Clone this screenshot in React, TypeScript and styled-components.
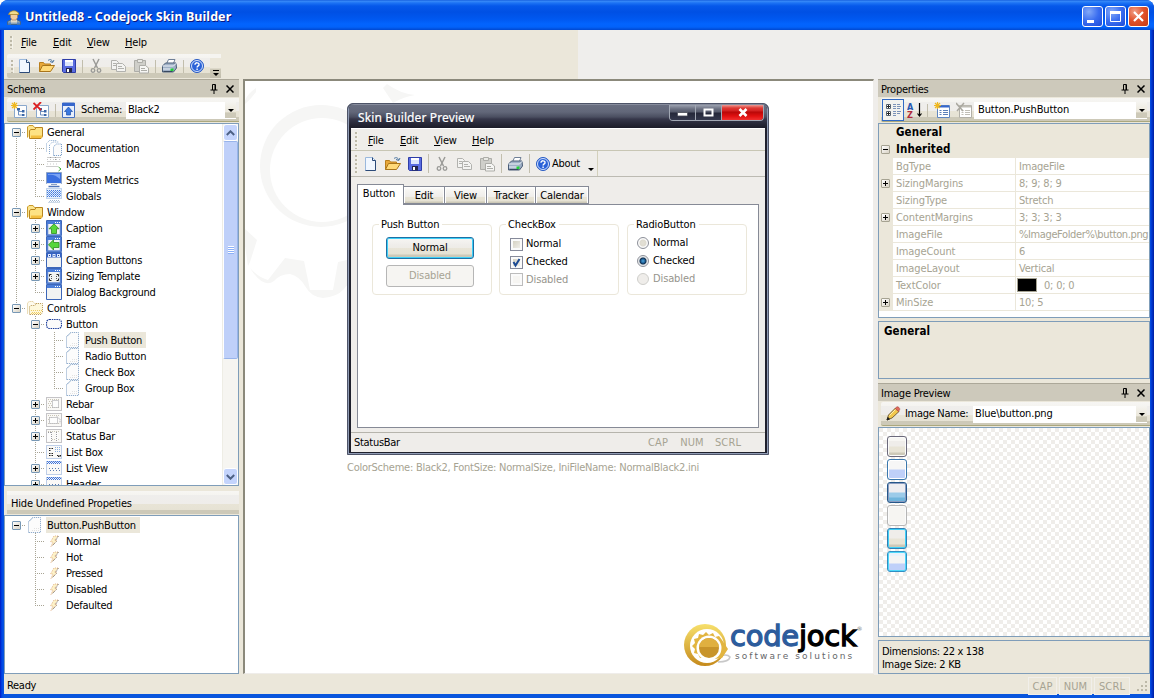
import React from "react";
import styled, { createGlobalStyle, css } from "styled-components";

const Global = createGlobalStyle`
  * { box-sizing: border-box; }
  body { margin: 0; background: #fff; overflow: hidden; }
  #root {
    font-family: "DejaVu Sans Condensed", "DejaVu Sans", sans-serif;
    font-stretch: condensed;
    font-size: 11px; line-height: 14px; letter-spacing: -0.3px; color: #000;
    white-space: nowrap; cursor: default;
  }
  svg { display: block; flex: none; }
`;

const BEIGE = "#ebe7da";
const EDGE = "#7f9db9";
const GREY = "#a6a392";

/* ---------- window frame ---------- */
const Window = styled.div`
  width: 1154px; height: 698px; display: flex; flex-direction: column;
  background: linear-gradient(90deg, #0019c4 0, #0048e8 2px, #0855dd 4px, #0855dd 1150px, #0040e0 1151px, #001ea0 100%);
  border-radius: 8px 8px 0 0; overflow: hidden;
`;
const TitleBar = styled.div`
  height: 30px; flex: none; display: flex; align-items: center; padding: 3px 5px 0 6px; color: #fff;
  background: linear-gradient(180deg, #0a52d8 0, #3a8cf8 1px, #1c72f4 3px, #0558ea 6px, #0050e4 12px, #0058f0 19px, #0264fe 24px, #0262fa 27px, #0048d0 30px);
`;
const Title = styled.div`
  flex: 1; margin-left: 3px; font: bold 12.5px/22px "Noto Sans", sans-serif; letter-spacing: 0.08px;
  text-shadow: 1px 1px 0 #0a1883;
`;
const CaptionButton = styled.div<{ $close?: boolean }>`
  width: 21px; height: 21px; margin-left: 2px; border: 1px solid #fff; border-radius: 3px;
  background: ${p => p.$close
    ? "radial-gradient(circle at 30% 25%, #f0a088 0, #e2532c 45%, #c63a12 100%)"
    : "radial-gradient(circle at 30% 25%, #83a9f8 0, #3a6df0 50%, #1c4bd8 100%)"};
`;
const Client = styled.div`
  margin: 0 4px; height: 664px; flex: none; display: flex; flex-direction: column; background: ${BEIGE};
`;
const Bars = styled.div`
  height: 49px; flex: none;
  background: linear-gradient(90deg, #ebe7da 0, #ebe7da 574px, #efeeec 574px);
`;
const MenuBar = styled.div<{ $pad: number }>`
  height: 24px; display: flex; align-items: center; padding: 1px 0 0 ${p => p.$pad}px;
`;
const MenuItem = styled.div<{ $w: number }>`
  width: ${p => p.$w}px; letter-spacing: -0.2px; &::first-letter { text-decoration: underline; text-underline-offset: 1px; }
`;
const Gripper = styled.div<{ $h?: number }>`
  width: 3px; height: ${p => p.$h ?? 13}px; flex: none;
  background: repeating-linear-gradient(180deg, #bdb9a8 0, #bdb9a8 2px, transparent 2px, transparent 4px);
  border-right: 1px solid #f4f2ea;
`;
const barSkin = css`
  background: linear-gradient(180deg, #f7f6f3 0, #f5f4f0 4px, #efeeec 4px, #efedea 13px, #e8e4d6 13px, #e6e2d4 19px, #cdc9b8 19px, #cdc9b8 100%);
`;
const ToolStrip = styled.div`
  display: flex; align-items: flex-start; margin-left: 3px; width: 214px; height: 24px;
`;
const ToolBar = styled.div`
  ${barSkin} width: 203px; height: 24px; display: flex; align-items: center; padding-left: 4px; border-radius: 2px 0 0 2px;
`;
const BarEnd = styled.div`
  width: 11px; height: 24px; display: flex; align-items: flex-end; justify-content: center; padding-bottom: 1px;
  background: linear-gradient(180deg, #f5f4f0 0, #f5f4f0 4px, #ebe7da 4px, #ebe7da 14px, #cdc9b8 15px, #c2bead 100%);
`;
const Tool = styled.div<{ $w?: number }>`
  width: ${p => p.$w ?? 22}px; flex: none; display: flex;
`;
const Rule = styled.div<{ $r?: number; $h?: number }>`
  width: 1px; height: ${p => p.$h ?? 13}px; flex: none; background: #c2bead;
  margin: 0 ${p => p.$r ?? 5}px 0 0;
`;

const Main = styled.div`display: flex; height: 596px; flex: none;`;

/* ---------- dock panes ---------- */
const LeftDock = styled.div`width: 235px; flex: none; display: flex; flex-direction: column;`;
const RightDock = styled.div`width: 272px; flex: none; display: flex; flex-direction: column;`;
const PaneHeader = styled.div`
  height: 18px; flex: none; display: flex; align-items: center; padding: 1px 5px 0 3px; border-top: 1px solid #aca899;
  background: #cdc9bb;
`;
const PaneName = styled.div`flex: 1; letter-spacing: -0.25px; padding-top: 1px;`;
const PaneBar = styled.div<{ $pad?: number }>`
  ${barSkin} height: 24px; flex: none; margin: 1px 0 1px 3px; padding: 1px 3px 0 ${p => p.$pad ?? 4}px; display: flex; align-items: center;
  border-bottom: 1px solid #aba87e; border-radius: 2px 0 0 2px;
`;
const Combo = styled.div<{ $ls?: number; $pad?: number }>`
  flex: 1; height: 17px; display: flex; align-items: center; justify-content: space-between; background: #fff; padding: 0 0 0 ${p => p.$pad ?? 2}px;
  letter-spacing: ${p => p.$ls ?? -0.25}px;
`;
const ComboArrow = styled.div`
  width: 11px; height: 16px; display: flex; align-items: center; justify-content: center;
  background: linear-gradient(180deg, #f5f4f0 0, #ebe7da 65%, #cdc9b8 66%);
`;
const Arrow = styled.i`
  border: 3px solid transparent; border-top-color: #000; border-bottom: 0; width: 0; height: 0;
`;
const Box = styled.div<{ $h: number; $bg?: string }>`
  height: ${p => p.$h}px; flex: none; border: 1px solid ${EDGE}; background: ${p => p.$bg ?? "#fff"}; overflow: hidden; display: flex;
`;
const HideBar = styled.div`
  ${barSkin} height: 23px; flex: none; margin: 5px 0 1px 3px; padding: 2px 4px 0; display: flex; align-items: center; letter-spacing: -0.2px;
`;

/* ---------- tree ---------- */
const TreeList = styled.div<{ $top?: number }>`flex: 1; padding: ${p => p.$top ?? 0}px 0 0 2px; overflow: hidden;`;
const TreeRow = styled.div`height: 16px; display: flex; align-items: center;`;
const dotV = "repeating-linear-gradient(180deg,#a8a494 0,#a8a494 1px,transparent 1px,transparent 2px)";
const dotH = "repeating-linear-gradient(90deg,#a8a494 0,#a8a494 1px,transparent 1px,transparent 2px)";
const Guide = styled.div<{ $v: "full" | "top" | "bottom" | "none"; $h?: boolean }>`
  width: 19px; height: 16px; flex: none; display: flex; align-items: center; padding-left: 5px;
  background-image: ${dotV}, ${dotH};
  background-repeat: no-repeat;
  background-position: 9px ${p => (p.$v === "bottom" ? 8 : 0)}px, 9px 8px;
  background-size: 1px ${p => (p.$v === "none" ? 0 : p.$v === "full" ? 16 : 8)}px, ${p => (p.$h ? 10 : 0)}px 1px;
`;
const Expander = styled.div<{ $open?: boolean; $plain?: boolean }>`
  width: 9px; height: 9px; border: 1px solid ${p => (p.$plain ? "#a6a392" : "#7898b5")}; border-radius: 1px;
  background:
    linear-gradient(#000, #000) 1px 3px / 5px 1px no-repeat,
    linear-gradient(#000, #000) 3px 1px / ${p => (p.$open ? "0 0" : "1px 5px")} no-repeat,
    linear-gradient(135deg, #fff, #d8d2c4);
`;
const TreeIcon = styled.div`width: 20px; padding-left: 1px; flex: none;`;
const TreeText = styled.div<{ $sel?: boolean }>`
  height: 16px; line-height: 16px; padding: 1px 4px 0 1px; letter-spacing: -0.24px; ${p => p.$sel && `background: ${BEIGE};`}
`;
const ScrollBar = styled.div`
  width: 16px; flex: none; background: #f6f5f1; display: flex; flex-direction: column; border-left: 1px solid #eeede5;
`;
const ScrollButton = styled.div`
  height: 17px; border: 1px solid #fff; border-radius: 3px; background: #c4d4fc; display: flex; align-items: center; justify-content: center;
`;
const Thumb = styled.div`
  height: 218px; border: 1px solid #98b4ea; border-left-color: #fff; border-radius: 2px; background: #bfd0f9;
  display: flex; align-items: center; justify-content: center;
`;
const ThumbGrip = styled.div`
  width: 6px; height: 8px; background: repeating-linear-gradient(180deg, #fff 0, #fff 1px, #8cb0f8 1px, #8cb0f8 2px);
`;
const Grow = styled.div`flex: 1;`;

/* ---------- document area ---------- */
const Document = styled.div`
  position: relative; margin-left: 4px; width: 631px; flex: none; background: #fff; overflow: hidden; height: 595px;
  border: 2px solid #8b897b; border-right: 1px solid #efedea; border-bottom: 1px solid #efedea;
`;
const Watermark = styled.svg`position: absolute; left: 0; top: 0;`;
const Gutter = styled.div`width: 4px; background: #efedea;`;
const Note = styled.div`position: absolute; left: 102px; top: 380px; color: ${GREY}; letter-spacing: -0.25px;`;
const Logo = styled.div`position: absolute; left: 438px; top: 540px; display: flex;`;
const LogoWords = styled.div`margin-left: -1px; padding-top: 1px;`;
const LogoName = styled.div`
  height: 29px; font: 29px/29px "DejaVu Sans", sans-serif; letter-spacing: -0.25px; color: #2d5c9c; -webkit-text-stroke: 1.3px #2d5c9c;
  display: flex;
`;
const LogoTail = styled.span`color: #000; -webkit-text-stroke: 1.3px #000;`;
const LogoMark = styled.span`font-size: 6px; line-height: 14px; color: #777; -webkit-text-stroke: 0; letter-spacing: 0;`;
const LogoLine = styled.div`
  margin: 0 0 0 5px; font: 9px/10px "DejaVu Sans", sans-serif; letter-spacing: 2.08px; color: #66676a;
`;

/* ---------- skinned preview window ---------- */
const Preview = styled.div`
  position: absolute; left: 102px; top: 22px; width: 422px; height: 352px; border-radius: 6px 6px 0 0;
  border: 1px solid #4e5468; background: #1f202c; padding: 0 3px 2px 3px; display: flex; flex-direction: column;
  box-shadow: inset 1px 0 0 #8f9bb4, inset -1px 0 0 #8f9bb4, inset 0 -1px 0 #8f9bb4;
`;
const PreviewTitle = styled.div`
  height: 24px; flex: none; margin: 0 -2px 0 -2px; border-radius: 5px 5px 0 0; display: flex; align-items: flex-start; padding: 0 3px 0 9px; color: #fff;
  background: linear-gradient(180deg, #a5abba 0, #696e80 1px, #626779 8px, #4a4e60 13px, #36374a 15px, #292a3a 19px, #1c1c28 24px);
`;
const PreviewName = styled.div`flex: 1; font: 400 12px/27px "Noto Sans", sans-serif; letter-spacing: 0.12px; -webkit-text-stroke: 0.2px #fff;`;
const FrameButtons = styled.div`
  display: flex; height: 16px; border: 1px solid #a2a8b4; border-top: 0; border-radius: 0 0 4px 4px; overflow: hidden; margin-top: 1px;
`;
const FrameButton = styled.div<{ $w: number; $close?: boolean }>`
  width: ${p => p.$w}px; height: 15px; border-right: 1px solid #a2a8b4; display: flex; align-items: center; justify-content: center;
  background: ${p => p.$close
    ? "linear-gradient(180deg,#ee9a94 0,#de3a34 3px,#d32020 6px,#b80808 7px,#e01010 11px,#f03030 15px)"
    : "linear-gradient(180deg,#9ca2b0 0,#6a6f80 4px,#565b6c 7px,#25283a 8px,#34384c 15px)"};
  &:last-child { border-right: 0; }
`;
const PreviewBody = styled.div`flex: 1; background: #efedea; display: flex; flex-direction: column; border-top: 1px solid #fff; letter-spacing: -0.12px;`;
const PreviewMenu = styled.div`height: 22px; flex: none; display: flex; align-items: center; padding: 2px 0 0 4px; border-bottom: 1px solid #c8c6b4;`;
const PreviewTools = styled.div`height: 26px; flex: none; display: flex; border-bottom: 1px solid #bcbab2;`;
const PreviewToolBar = styled.div`width: 247px; display: flex; align-items: center; padding-left: 4px; border-right: 1px solid #d3d0bc;`;
const MenuGap = styled.div<{ $w: number }>`width: ${p => p.$w}px; flex: none;`;
const AboutText = styled.div`width: 34px; letter-spacing: -0.3px;`;
const ArrowLow = styled.div`display: flex; padding-top: 11px; margin-left: 2px;`;
const Tabs = styled.div`height: 27px; padding: 6px 0 0 6px; flex: none; display: flex; align-items: flex-end; z-index: 1;`;
const Tab = styled.div<{ $w: number; $on?: boolean }>`
  width: ${p => p.$w}px; border: 1px solid #868a96; text-align: center; flex: none;
  ${p => p.$on
    ? "height: 21px; line-height: 18px; background: #fff; border-bottom: 0; margin-bottom: -1px; padding-right: 3px;"
    : "height: 18px; line-height: 18px; border-left-width: 0; background: linear-gradient(180deg,#fff 0,#f7f6f3 3px,#efedea 10px,#e8e4d6 10px,#e6e2d4 14px,#cdc9b8 15px); box-shadow: inset 1px 0 #fff, inset -1px 0 #fff;"}
`;
const Page = styled.div`
  margin: 0 6px; height: 224px; flex: none; background: #fff; border: 1px solid #868a96; padding: 13px 0 0 14px; display: flex; gap: 7px;
`;
const Group = styled.fieldset<{ $pad: number; $l?: number }>`
  margin: 0 0 0 ${p => p.$l ?? 0}px; padding: 0 0 0 ${p => p.$pad}px; width: 120px; min-width: 0; height: 77px; border: 1px solid ${BEIGE}; border-radius: 4px; display: block;
`;
const Legend = styled.legend<{ $l: number }>`padding: 0 3px 0 2px; margin-left: ${p => p.$l}px; height: 13px; line-height: 13px;`;
const PushButton = styled.div<{ $off?: boolean }>`
  width: 88px; height: 22px; line-height: 20px; text-align: center; border-radius: 3px; margin-bottom: 6px;
  ${p => p.$off
    ? `border: 1px solid #b6b6b6; background: #f6f5f2; color: ${GREY};`
    : "border: 1px solid #1e70a5; box-shadow: inset 0 0 0 1px #3fd0f8; margin-top: 6px; background: linear-gradient(180deg,#f7f6f3 0,#efedea 7px,#eeece6 10px,#e9e5d8 10px,#e6e2d4 16px,#cdc9b8 17px);"}
`;
const Choices = styled.div<{ $top: number }>`padding-top: ${p => p.$top}px;`;
const Choice = styled.div<{ $h?: number; $off?: boolean; $gap?: number }>`
  height: ${p => p.$h ?? 18}px; display: flex; align-items: center; gap: ${p => p.$gap ?? 3}px; ${p => p.$off && "color: #96948c;"}
`;
const Check = styled.div<{ $off?: boolean }>`
  width: 13px; height: 13px; border: 1px solid ${p => (p.$off ? "#bcbcbc" : "#868a9a")}; box-shadow: inset 0 0 0 2px #fafafa;
  background: linear-gradient(135deg, ${p => (p.$off ? "#f6f5f2, #f6f5f2" : "#cdc9b8, #f7f6f3")});
`;
const Radio = styled.div<{ $on?: boolean; $off?: boolean }>`
  width: 12px; height: 12px; border-radius: 50%; border: 1px solid ${p => (p.$off ? "#cfcfcb" : "#8c8f98")};
  background: ${p => (p.$on
    ? "radial-gradient(circle at 50% 50%, #4fa8dc 0, #1d5f98 2px, #12304e 3px, #d8dde2 4px, #f4f4f4 5px)"
    : p.$off ? "#efedea" : "radial-gradient(circle, #e4e1d6 0, #dedbd0 3px, #fafafa 4px)")};
`;
const Status = styled.div`
  flex: 1; display: flex; align-items: center; padding: 2px 2px 0 3px;
`;
const PreviewStatus = styled.div`
  margin-top: 4px; flex: 1; display: flex; align-items: center; padding: 0 2px 0 3px; border-top: 1px solid #b6b4ac; letter-spacing: -0.3px;
`;
const Key = styled.div<{ $w: number; $flat?: boolean }>`
  width: ${p => p.$w}px; height: 18px; line-height: 17px; margin-left: 2px; text-align: center; color: ${GREY}; letter-spacing: 0.15px;
  ${p => !p.$flat && "border: 1px solid #f1efea;"}
`;

/* ---------- property grid ---------- */
const Grid = styled.div`flex: 1; overflow: hidden;`;
const GridHead = styled.div`
  height: 17px; display: flex; align-items: center; background: ${BEIGE}; font-weight: bold; font-size: 11.5px; letter-spacing: 0.1px;
`;
const GridRow = styled.div`height: 17px; display: flex; color: ${GREY};`;
const GridMargin = styled.div`width: 14px; flex: none; height: 17px; background: ${BEIGE}; display: flex; align-items: center; padding-left: 2px;`;
const GridName = styled.div`
  width: 123px; flex: none; padding-left: 3px; line-height: 17px; letter-spacing: -0.1px; border-right: 1px solid ${BEIGE}; border-bottom: 1px solid ${BEIGE};
`;
const GridValue = styled.div<{ $tight?: boolean }>`
  flex: 1; padding-left: 3px; line-height: 17px; letter-spacing: ${p => (p.$tight ? -0.38 : -0.2)}px; border-bottom: 1px solid ${BEIGE}; display: flex; align-items: center;
`;
const HeadText = styled.div`padding: 0 0 2px 3px;`;
const ColorChip = styled.div`width: 20px; height: 14px; background: #000; border: 1px solid #a6a392; margin: 0 7px 0 -2px;`;
const Described = styled.div`padding: 2px 5px; font-weight: bold; font-size: 11.5px; letter-spacing: 0.1px; line-height: 15px;`;
const Toggled = styled.div`width: 22px; height: 22px; border: 1px solid #316ac5; background: #f3f2ee; display: flex; align-items: center; justify-content: center; margin-right: 3px;`;
const Checker = styled.div`
  flex: 1; padding: 8px; display: flex; flex-direction: column; gap: 2px;
  background: conic-gradient(#fff 25%, #efedea 0 50%, #fff 0 75%, #efedea 0) 0 0 / 8px 8px;
`;
const Swatch = styled.div<{ $edge: string; $glow: string; $fill: string }>`
  width: 20px; height: 21px; flex: none; border: 1px solid ${p => p.$edge}; border-radius: 3px;
  box-shadow: inset 0 0 0 1px ${p => p.$glow}; background: ${p => p.$fill};
`;
const Info = styled.div`padding: 4px 3px 0; line-height: 13px; letter-spacing: -0.3px;`;
const Spacer = styled.div<{ $h: number }>`height: ${p => p.$h}px; flex: none;`;

/* ---------- icons ---------- */
const Svg = (p: React.SVGProps<SVGSVGElement>) => <svg width="16" height="16" viewBox="0 0 16 16" fill="none" {...p} />;
const NewIcon = () => (
  <Svg><path d="M2.500 1.500h7l3 3v10h-10z" fill="#f1f7ff" stroke="#9ab8dc" /><path d="M9.500 1.500v3h3M12.500 4.500v10h-10" stroke="#2c4a78" /></Svg>
);
const OpenIcon = () => (
  <Svg>
    <path d="M.5 13.500v-9h4l1 1.500h6v2" fill="#e8a83a" stroke="#b97e1c" />
    <path d="M.5 13.500l3-6h12l-4 6z" fill="#ffd978" stroke="#a8741a" />
    <path d="M9 2.500c2-1.500 4-1 4.500 1.500M15 2l-1.300 2.500L11 3.500" stroke="#47729f" />
  </Svg>
);
const SaveIcon = () => (
  <Svg>
    <path d="M1.500 1.500h13v13h-12l-1-1z" fill="#5a6ce0" stroke="#2e3da8" />
    <path d="M4 2h8v6H4z" fill="#dde6fb" /><path d="M4 2h8v2H4z" fill="#fff" /><path d="M5 10h6v4.500H5z" fill="#23264a" /><path d="M6 11h2v3H6z" fill="#fff" />
  </Svg>
);
const CutIcon = () => (
  <Svg stroke="#9a9a97"><path d="M5 1l4.500 9M11 1L6.500 10" strokeWidth="1.500" /><circle cx="5" cy="12.500" r="1.800" strokeWidth="1.300" /><circle cx="11" cy="12.500" r="1.800" strokeWidth="1.300" /></Svg>
);
const CopyIcon = () => (
  <Svg stroke="#b2b2ae"><path d="M1.500 2.500h5l2 2v7h-7z" fill="#f4f4f2" /><path d="M3 5.500h3M3 7.500h3" /><path d="M6.500 5.500h6l3 3v5h-9z" fill="#f4f4f2" /><path d="M8 8.500h4M8 10.500h6" /></Svg>
);
const PasteIcon = () => (
  <Svg stroke="#adada8"><path d="M1.500 2.500h11v11h-11z" fill="#cfcfca" /><path d="M4.500 1.500h5v3h-5z" fill="#e8e8e4" /><path d="M6.500 7.500h6l3 2.500v5h-9z" fill="#f6f6f4" /><path d="M8 10.500h4M8 12.500h6" /></Svg>
);
const PrintIcon = () => (
  <Svg>
    <path d="M5.500 6l2-4.500h6.500l-2 5" fill="#fff" stroke="#6f7f96" />
    <path d="M1.500 8l3-3h10.500l.500 5-3 4H1.500z" fill="#9fb0c6" stroke="#4a5c76" />
    <path d="M1.500 8h11l3-3M2 11h9" stroke="#eef2f8" /><path d="M2.500 13.500h9" stroke="#38485e" /><path d="M9.500 10.500h3V13h-3z" fill="#22d238" />
  </Svg>
);
const HelpIcon = () => (
  <Svg>
    <circle cx="8" cy="8" r="6.500" fill="#2a62d8" stroke="#2a5cc4" /><circle cx="8" cy="8" r="5.500" stroke="#e4eeff" strokeWidth=".9" />
    <path d="M6 6.700c0-2.600 4.200-2.400 4 0 0 1.200-1.800 1.200-1.900 2.800M8.100 10.600v1.400" stroke="#fff" strokeWidth="1.400" />
  </Svg>
);
const PinIcon = () => (
  <svg width="8" height="10" viewBox="0 0 8 10" fill="none"><path d="M2.500 6V.5h3V6M5 1v5M.5 6h7M4 6v4" stroke="#000" /></svg>
);
const CloseIcon = () => (
  <svg width="8" height="8" viewBox="0 0 8 8" fill="none"><path d="M.5.5l7 7M7.500.5l-7 7" stroke="#000" strokeWidth="1.500" /></svg>
);
const Spark = () => <path d="M3.500 0v7M0 3.500h7M1 1l5 5M6 1L1 6" stroke="#f0b81e" strokeWidth="1.200" />;
const SchemaIcon = ({ del }: { del?: boolean }) => (
  <Svg>
    <path d="M3.500 3.500h12v12h-12z" fill="#fdfdfd" stroke="#8aa8cc" />
    <path d="M7.500 8v5h4M7.500 9.500h4" stroke="#6d8fc0" /><path d="M6 6h3v2.500H6zM11 8h2.500v2.500H11zM11 12h2.500v2H11z" fill="#3a66a8" />
    {del ? <path d="M.5 1l7.500 7M8 0L.5 7.500" stroke="#dc2020" strokeWidth="1.800" /> : <Spark />}
  </Svg>
);
const UpIcon = () => (
  <Svg><path d="M1.500 1h12v14.500h-12z" fill="#e9f0fc" stroke="#4670c0" /><path d="M1 1h13v3H1z" fill="#3767cc" /><path d="M7.500 5l4 4.500h-2V13h-4V9.500h-2z" fill="#3a78e0" stroke="#1f4fa8" strokeWidth=".7" /></Svg>
);
const FolderIcon = ({ ghost }: { ghost?: boolean }) => ghost ? (
  <Svg strokeDasharray="1 1">
    <path d="M.5 13.500V3l1.500-1.500h4l1.500 2h4.500v2" fill="#fefbee" stroke="#d8bd7c" />
    <path d="M2.500 14.500v-8l1.500-1h4l1-2h6.500v9l-1.500 2z" fill="#fef8dc" stroke="#b99a5c" />
    <path d="M4 10.500h11M5 12.500h10M4 13.500h10" stroke="#f0cc60" />
  </Svg>
) : (
  <Svg>
    <path d="M.5 13.500V3l1.500-1.500h4l1.500 2h4.500v2" fill="#fce58e" stroke="#c99a2c" />
    <path d="M2.500 14.500v-8l1.500-1h4l1-2h6.500v9l-1.500 2z" fill="#fde384" stroke="#b78420" />
    <path d="M4 11.500h11v2.500H4z" fill="#f4c040" />
  </Svg>
);
const PageIcon = () => (
  <Svg><path d="M1.500 15.500v-11l4-4h8v15z" fill="#fcfcfc" stroke="#7f9fc4" strokeDasharray="1 1" /><path d="M2 4.500L5.500 1" stroke="#a8bfd8" /><path d="M5 13.500h8M7 11.500h6" stroke="#e2e2e2" strokeDasharray="1 1" /></Svg>
);
const PagesIcon = () => (
  <Svg><path d="M.5 11.500v-8l3-3h7" stroke="#88a8cc" strokeDasharray="1 1" /><path d="M3.500 14v-9l3-3h6" stroke="#88a8cc" strokeDasharray="1 1" /><path d="M7.500 15.500V7l2.500-3h5.500v11.500z" fill="#fbfbfb" stroke="#7097c4" strokeDasharray="1 1" /></Svg>
);
const MacroIcon = () => (
  <Svg><path d="M1.500 1.500h14M1.500 5.500h14M.5 10.500h11M4.500 1v4M9.500 1v4" stroke="#9a9a9a" strokeDasharray="1 1" /><path d="M1 3.500h14M1 8h10" stroke="#c9c9c9" strokeDasharray="1 2" /><path d="M12.500 11l2.500 2-2.500 2" stroke="#3cab30" /></Svg>
);
const MonitorIcon = ({ ghost }: { ghost?: boolean }) => ghost ? (
  <Svg strokeDasharray="1 1">
    <path d="M.5.5h15v10H.5z" fill="#e6effc" stroke="#8fb0dc" />
    <path d="M1 2.500h14M1 4.500h14M1 6.500h14M1 8.500h14" stroke="#3f78dc" /><path d="M2 3.500h13M2 5.500h13M2 7.500h13" stroke="#6a98e8" />
    <path d="M4 12.500h9M2.500 14.500h11" stroke="#9db4d0" /><path d="M3 13.500h11" stroke="#b4c8e0" />
  </Svg>
) : (
  <Svg>
    <path d="M.5.5h15v11H.5z" fill="#3a70e0" stroke="#8aa0c4" />
    <path d="M2 3c4-1 8 0 12 4V2H2z" fill="#7ba5f4" />
    <path d="M1 11.500h14" stroke="#dfe6f2" /><path d="M5 12.500h6" stroke="#8aa0c4" /><path d="M2.500 14.500h11" stroke="#4f74b8" strokeWidth="1.500" />
  </Svg>
);
const WinIcon = ({ children }: { children?: React.ReactNode }) => (
  <Svg><path d="M.5.5h15v15H.5z" fill="#f2f3f2" stroke="#3c66b8" /><path d="M1 1h14v3H1z" fill="#4a7cd8" /><path d="M9 2.500h5" stroke="#fff" strokeDasharray="1 1" />{children}</Svg>
);
const Sides = () => <path d="M1.500 4v11h13V4" stroke="#5a84d4" strokeWidth="1.500" />;
const CaptionIcon = () => <WinIcon><Sides /><path d="M8 3.800l5 5H10.500v4.700h-5V8.800H3z" fill="#57d63a" stroke="#2d8c1c" strokeWidth=".8" /></WinIcon>;
const FrameIcon = () => <WinIcon><Sides /><path d="M2.500 8.800l5-5V6.500H13v5H7.500v2.500z" fill="#57d63a" stroke="#2d8c1c" strokeWidth=".8" /></WinIcon>;
const CapButtonsIcon = () => <WinIcon><path d="M1 1h14v4.500H1z" fill="#3461c4" /><path d="M2 2h3v3H2zM6.500 2h3v3h-3zM11 2h3v3h-3z" fill="#dde8ff" /><path d="M3 3h1v1H3zM7.500 3h1v1h-1zM12 3h1v1h-1z" fill="#20438c" /></WinIcon>;
const SizingIcon = () => <WinIcon><Sides /><path d="M5.500 6.500h-2v2M10.500 6.500h2v2M5.500 12.500h-2v-2M10.500 12.500h2v-2" stroke="#222" /><path d="M5.500 8v3M10.500 8v3" stroke="#555" strokeDasharray="1 1" /></WinIcon>;
const GhostRect = ({ kind }: { kind: string }) => {
  const blue = kind === "lv" || kind === "hd" || kind === "lb";
  return (
    <Svg strokeDasharray="1 1">
      <path d="M.5 1.500h15v13H.5z" fill="#faf9f7" stroke={blue ? "#7fa0d4" : "#8c8c92"} />
      {!blue && <path d="M2 3.500h12M3 5.500h3M2 7.500h4M3 9.500h3M2 11.500h12" stroke="#c9c5b6" />}
      {kind === "rb" && <path d="M6.500 4.500h6v7h-6z" stroke="#9a9aa0" fill="#fdfdfd" />}
      {kind === "tb" && <path d="M3.500 5.500h8v6h-8zM11 4.500l3 3v4" stroke="#9a9aa0" fill="#fdfdfd" />}
      {kind === "sb" && <><path d="M1 4h5v9H1zM10 4h2v9h-2z" fill="#fdfdfd" /><path d="M5.500 4v9M2 4.500h4M10.500 4v9" stroke="#9a9aa0" /></>}
      {kind === "lb" && <><path d="M3 4.500h5M3 6.500h2M3 9.500h5M3 11.500h5M11 11.500h4M12 12.500h3" stroke="#222" strokeDasharray="1.500 1" /><path d="M9 3.500h5M9 5.500h5M9 7.500h5" stroke="#8ab0e4" /></>}
      {(kind === "lv" || kind === "hd") && <><path d="M1 1.500h14M2 2.500h14M1 3.500h14" stroke="#3f74dc" /><path d="M3 8.500h10M4 10.500h10" stroke="#5a7ab0" strokeDasharray="1 2" /></>}
    </Svg>
  );
};
const ButtonIcon = () => <Svg><rect x=".5" y="3.500" width="15" height="9" rx="3" fill="#fbfbfb" stroke="#1e3f9c" strokeWidth="1.200" strokeDasharray="1.500 .8" /></Svg>;
const BoltIcon = () => (
  <Svg strokeDasharray="1 1"><path d="M12 3L8.500 7.500h2.500L5 13.500 7 9H4.500L8 3z" fill="#fdf3c8" stroke="#e4b48c" /><path d="M12.500 3L9.500 7.500M10.500 8.500L6 13" stroke="#77706a" /></Svg>
);
const CategoryIcon = () => (
  <Svg><path d="M1.500 2.500h4v4h-4zM1.500 9.500h4v4h-4z" fill="#fff" stroke="#55606e" /><path d="M2 4.500h3M3.500 3v3M2 11.500h3M3.500 10v3" stroke="#222" /><path d="M8 2.500h3M12 2.500h3M8 4.500h3M12 4.500h4M8 6.500h3M12 6.500h3M8 9.500h3M12 9.500h4M8 11.500h3M12 11.500h3M8 13.500h3" stroke="#7c93b8" /></Svg>
);
const SortIcon = () => (
  <Svg>
    <text x="0" y="7.500" fontSize="9" fontWeight="bold" fill="#2758b0" letterSpacing="0">A</text>
    <text x="0" y="15.500" fontSize="9" fontWeight="bold" fill="#b02a3c" letterSpacing="0">Z</text>
    <path d="M12.500 1v13M10.500 11.500l2 2.500 2-2.500" stroke="#000" strokeWidth="1.200" />
  </Svg>
);
const AddPropIcon = ({ off }: { off?: boolean }) => (
  <Svg>
    <path d="M3.500 3.500h12v12h-12z" fill="#fff" stroke={off ? "#b2b0a8" : "#5f86c0"} /><path d="M4 4.500h11" stroke={off ? "#c0beb6" : "#3767cc"} strokeWidth="2" />
    <path d="M5.500 8.500h2M9 8.500h5M5.500 10.500h2M9 10.500h5M5.500 12.500h2M9 12.500h5" stroke={off ? "#c0beb6" : "#5c7fb8"} />
    {off ? <path d="M0 1l7 8M8 1L1 9" stroke="#aaa8a0" strokeWidth="1.500" /> : <Spark />}
  </Svg>
);
const PencilIcon = () => (
  <Svg><path d="M2 14l1.500-5L10.500 2l3.500 3.500L7 12z" fill="#f2c84c" stroke="#6a5630" strokeWidth=".9" /><path d="M10 2.500L12 .8c1-.5 3.200 1.500 2.700 2.700L13.500 5.500z" fill="#e06a5c" stroke="#a8453a" strokeWidth=".6" /><path d="M2 14l.8-2.500L4.500 13z" fill="#000" stroke="#222" /><path d="M4.500 9.500l6-6" stroke="#fff0b0" /></Svg>
);
const WorkerIcon = () => (
  <Svg>
    <path d="M1.500 15.500v-3l4-2h5l4 2v3z" fill="#8ea4b4" stroke="#3d5c80" strokeWidth=".8" /><path d="M5 10.500h6v3H5z" fill="#dcd8cc" />
    <path d="M4.500 5h7v3.500L10 11H6L4.500 8.500z" fill="#f3cda0" stroke="#a87a48" strokeWidth=".6" />
    <path d="M2.500 5.500C4 .5 12 .5 13 5.500z" fill="#f2dc8c" stroke="#a8842c" strokeWidth=".8" /><path d="M2 14.500h3M11 14.500h3" stroke="#4f83c8" strokeWidth="2" />
  </Svg>
);

/* ---------- tree data ---------- */
type Node = { text: string; icon: React.ReactNode; open?: boolean; sel?: boolean; kids?: Node[]; more?: boolean };
const pageNode = (text: string, sel?: boolean): Node => ({ text, icon: <PageIcon />, sel });
const schemaTree: Node[] = [
  { text: "General", icon: <FolderIcon />, open: true, kids: [
    { text: "Documentation", icon: <PagesIcon /> }, { text: "Macros", icon: <MacroIcon /> },
    { text: "System Metrics", icon: <MonitorIcon /> }, { text: "Globals", icon: <MonitorIcon ghost /> } ] },
  { text: "Window", icon: <FolderIcon />, open: true, kids: [
    { text: "Caption", icon: <CaptionIcon />, more: true }, { text: "Frame", icon: <FrameIcon />, more: true },
    { text: "Caption Buttons", icon: <CapButtonsIcon />, more: true }, { text: "Sizing Template", icon: <SizingIcon />, more: true },
    { text: "Dialog Background", icon: <WinIcon /> } ] },
  { text: "Controls", icon: <FolderIcon ghost />, open: true, kids: [
    { text: "Button", icon: <ButtonIcon />, open: true, kids: [pageNode("Push Button", true), pageNode("Radio Button"), pageNode("Check Box"), pageNode("Group Box")] },
    { text: "Rebar", icon: <GhostRect kind="rb" />, more: true }, { text: "Toolbar", icon: <GhostRect kind="tb" />, more: true },
    { text: "Status Bar", icon: <GhostRect kind="sb" />, more: true }, { text: "List Box", icon: <GhostRect kind="lb" /> },
    { text: "List View", icon: <GhostRect kind="lv" />, more: true }, { text: "Header", icon: <GhostRect kind="hd" />, more: true } ] },
];
const stateTree: Node[] = [
  { text: "Button.PushButton", icon: <PageIcon />, open: true, sel: true, kids: ["Normal", "Hot", "Pressed", "Disabled", "Defaulted"].map(text => ({ text, icon: <BoltIcon /> })) },
];
const Branch = ({ nodes, trail = [] }: { nodes: Node[]; trail?: boolean[] }) => (
  <>
    {nodes.map((n, i) => {
      const last = i === nodes.length - 1;
      const root = trail.length === 0;
      const v = root && i === 0 ? (last ? "none" : "bottom") : last ? "top" : "full";
      return (
        <React.Fragment key={n.text}>
          <TreeRow>
            {trail.map((line, k) => <Guide key={k} $v={line ? "full" : "none"} />)}
            <Guide $v={v} $h>{(n.kids || n.more) && <Expander $open={!!n.open} />}</Guide>
            <TreeIcon>{n.icon}</TreeIcon>
            <TreeText $sel={n.sel}>{n.text}</TreeText>
          </TreeRow>
          {n.kids && <Branch nodes={n.kids} trail={[...trail, !last]} />}
        </React.Fragment>
      );
    })}
  </>
);

const props: [string, string, boolean?][] = [
  ["BgType", "ImageFile"], ["SizingMargins", "8; 9; 8; 9", true], ["SizingType", "Stretch"], ["ContentMargins", "3; 3; 3; 3", true],
  ["ImageFile", "%ImageFolder%\\button.png"], ["ImageCount", "6"], ["ImageLayout", "Vertical"], ["TextColor", "0; 0; 0"], ["MinSize", "10; 5", true],
];
const swatches = [
  ["#6c6a7c", "#fbfbfa", "linear-gradient(180deg,#f7f6f3 4px,#efedea 4px 9px,#e8e4d6 10px 15px,#cdc9b8 16px)"],
  ["#3b78ae", "#fff", "linear-gradient(180deg,#f6f6f6 9px,#bfd0f9 10px)"],
  ["#25578a", "#8a9cc0", "linear-gradient(180deg,#eeedf0 9px,#9ccbe9 10px 14px,#70b5dc 15px)"],
  ["#b6b6b6", "#fbfbfb", "#f6f5f2"],
  ["#2f7fb4", "#3fd0f8", "linear-gradient(180deg,#efedea 9px,#e8e4d6 10px 15px,#cdc9b8 16px)"],
  ["#2f8fc4", "#4fd8fa", "linear-gradient(180deg,#e9f2fb 4px,#f4f4f4 4px 11px,#bfd0f9 12px)"],
];

const Header = ({ name }: { name: string }) => (
  <PaneHeader><PaneName>{name}</PaneName><Tool $w={16}><PinIcon /></Tool><CloseIcon /></PaneHeader>
);
const ComboBox = ({ text, ls, pad }: { text: string; ls?: number; pad?: number }) => (
  <Combo $ls={ls} $pad={pad}>{text}<ComboArrow><Arrow /></ComboArrow></Combo>
);
const FileTools = ({ tall }: { tall?: boolean }) => {
  const h = tall ? 19 : 13;
  return (
    <>
      <Tool><NewIcon /></Tool><Tool><OpenIcon /></Tool><Tool $w={21}><SaveIcon /></Tool>
      <Rule $h={h} />
      <Tool><CutIcon /></Tool><Tool $w={23}><CopyIcon /></Tool><Tool $w={22}><PasteIcon /></Tool>
      <Rule $h={h} /><Tool $w={22}><PrintIcon /></Tool><Rule $h={h} /><Tool $w={17}><HelpIcon /></Tool>
    </>
  );
};
const SizeGrip = () => (
  <svg width="11" height="11" viewBox="0 0 11 11" fill="#bdb9a8"><path d="M8 0h2v2H8zM8 4h2v2H8zM8 8h2v2H8zM4 4h2v2H4zM4 8h2v2H4zM0 8h2v2H0z" /></svg>
);

export default function App() {
  return (
    <Window>
      <Global />
      <TitleBar>
        <WorkerIcon />
        <Title>Untitled8 - Codejock Skin Builder</Title>
        <CaptionButton><svg width="19" height="19" viewBox="0 0 19 19"><path d="M4 13h7v3H4z" fill="#fff" /></svg></CaptionButton>
        <CaptionButton><svg width="19" height="19" viewBox="0 0 19 19" fill="none"><path d="M4.500 5.500h10v9h-10z" stroke="#fff" /><path d="M4 5.500h11" stroke="#fff" strokeWidth="3" /></svg></CaptionButton>
        <CaptionButton $close><svg width="19" height="19" viewBox="0 0 19 19"><path d="M5 5l9 9M14 5l-9 9" stroke="#fff" strokeWidth="2.200" /></svg></CaptionButton>
      </TitleBar>
      <Client>
        <Bars>
          <MenuBar $pad={6}>
            <Gripper /><MenuGap $w={8} />
            <MenuItem $w={32}>File</MenuItem><MenuItem $w={34}>Edit</MenuItem><MenuItem $w={38}>View</MenuItem><MenuItem $w={30}>Help</MenuItem>
          </MenuBar>
          <ToolStrip>
            <ToolBar><Gripper /><MenuGap $w={3} /><FileTools /></ToolBar>
            <BarEnd><svg width="6" height="7" viewBox="0 0 6 7"><path d="M0 0h6v1H0zM0 3h6L3 6z" /></svg></BarEnd>
          </ToolStrip>
        </Bars>
        <Main>
          <LeftDock>
            <Header name="Schema" />
            <PaneBar>
              <Tool><SchemaIcon /></Tool><Tool $w={22}><SchemaIcon del /></Tool><Rule /><Tool $w={20}><UpIcon /></Tool>
              <MenuGap $w={45}>Schema:</MenuGap>
              <ComboBox text="Black2" />
            </PaneBar>
            <Box $h={363}>
              <TreeList><Branch nodes={schemaTree} /></TreeList>
              <ScrollBar>
                <ScrollButton><svg width="9" height="6" viewBox="0 0 9 6" fill="none"><path d="M.8 5l3.700-3.700L8.200 5" stroke="#4d6185" strokeWidth="2" /></svg></ScrollButton>
                <Thumb><ThumbGrip /></Thumb>
                <Grow />
                <ScrollButton><svg width="9" height="6" viewBox="0 0 9 6" fill="none"><path d="M.8 1l3.700 3.700L8.200 1" stroke="#4d6185" strokeWidth="2" /></svg></ScrollButton>
              </ScrollBar>
            </Box>
            <HideBar>Hide Undefined Propeties</HideBar>
            <Box $h={159}><TreeList $top={1}><Branch nodes={stateTree} /></TreeList></Box>
          </LeftDock>
          <Document>
            <Watermark width="628" height="592" viewBox="245 81 628 592" fill="#f6f6f5">
              <path fillRule="evenodd" d="M260 166a61 61 0 1 1 122 0a61 61 0 1 1-122 0zM270 170a52 52 0 1 0 104 0a52 52 0 1 0-104 0z" />
              <path d="M245 101q2-7 11-13v4q-5 7-11 12zM387 84q14 10 28 11-12 2-22 8l-10-15zM245 229l12 11-7 22-2 4-3-20z" />
              <path d="M250 268q9 10 18 12l17-22 19 3 6 29h23l5-28 14-3v25q-3-2-8 5-7 8-21 9-12-1-18-12-6-10-15-12-10 0-16 7-11 8-24-13z" />
            </Watermark>
            <Preview>
              <PreviewTitle>
                <PreviewName>Skin Builder Preview</PreviewName>
                <FrameButtons>
                  <FrameButton $w={26}><svg width="11" height="9" viewBox="0 0 11 9"><path d="M.5 4.500h10v3.500H.5z" fill="#fff" stroke="#4a4d58" strokeWidth=".8" /></svg></FrameButton>
                  <FrameButton $w={26}><svg width="11" height="9" viewBox="0 0 11 9" fill="none"><path d="M1.500 1.500h8v6h-8z" stroke="#fff" strokeWidth="2" /></svg></FrameButton>
                  <FrameButton $w={41} $close><svg width="10" height="9" viewBox="0 0 10 9"><path d="M1.500 1l7 7M8.500 1l-7 7" stroke="#fff" strokeWidth="2.600" /></svg></FrameButton>
                </FrameButtons>
              </PreviewTitle>
              <PreviewBody>
                <PreviewMenu>
                  <Gripper $h={17} /><MenuGap $w={10} />
                  <MenuItem $w={32}>File</MenuItem><MenuItem $w={34}>Edit</MenuItem><MenuItem $w={38}>View</MenuItem><MenuItem $w={30}>Help</MenuItem>
                </PreviewMenu>
                <PreviewTools>
                  <PreviewToolBar>
                    <Gripper $h={18} /><MenuGap $w={5} /><FileTools tall /><AboutText>About</AboutText><ArrowLow><Arrow /></ArrowLow>
                  </PreviewToolBar>
                </PreviewTools>
                <Tabs>
                  <Tab $w={47} $on>Button</Tab><Tab $w={41}>Edit</Tab><Tab $w={42}>View</Tab><Tab $w={49}>Tracker</Tab><Tab $w={53}>Calendar</Tab>
                </Tabs>
                <Page>
                  <Group $pad={13}>
                    <Legend $l={-7}>Push Button</Legend>
                    <PushButton>Normal</PushButton><PushButton $off>Disabled</PushButton>
                  </Group>
                  <Group $pad={10}>
                    <Legend $l={-4}>CheckBox</Legend>
                    <Choices $top={4}>
                      <Choice><Check />Normal</Choice>
                      <Choice><Check><svg width="11" height="11" viewBox="0 0 11 11" fill="none"><path d="M2.500 5l2 3.500L8.500 2" stroke="#1c4a94" strokeWidth="2" /></svg></Check>Checked</Choice>
                      <Choice $h={17} $off><Check $off />Disabled</Choice>
                    </Choices>
                  </Group>
                  <Group $pad={9} $l={1}>
                    <Legend $l={-3}>RadioButton</Legend>
                    <Choices $top={3}>
                      <Choice $gap={4}><Radio />Normal</Choice><Choice $gap={4}><Radio $on />Checked</Choice><Choice $gap={4} $off><Radio $off />Disabled</Choice>
                    </Choices>
                  </Group>
                </Page>
                <PreviewStatus><Grow>StatusBar</Grow><Key $flat $w={32}>CAP</Key><Key $flat $w={32}>NUM</Key><Key $flat $w={36}>SCRL</Key><MenuGap $w={17} /></PreviewStatus>
              </PreviewBody>
            </Preview>
            <Note>ColorScheme: Black2, FontSize: NormalSize, IniFileName: NormalBlack2.ini</Note>
            <Logo>
              <svg width="48" height="46" viewBox="0 0 48 46">
                <defs>
                  <linearGradient id="gold" x1="0" y1="0" x2="0" y2="1"><stop offset="0" stopColor="#f7e06c" /><stop offset="1" stopColor="#c58a1c" /></linearGradient>
                </defs>
                <path d="M34 36q10-4 13 0-1 5-12 5" fill="none" stroke="#c8c8c8" strokeWidth="1.500" />
                <circle cx="22" cy="24" r="21" fill="url(#gold)" />
                <circle cx="24" cy="25" r="17" fill="#fff" />
                <path d="M39 19l-3-4-4 1-2-4-4 2-3-3-3 3-4-1-1 4-4 1 1 4-3 3 3 3-1 4 4 1 2 4 4-1 2 3 16-2 6-9z" fill="#e2b540" />
                <circle cx="26" cy="27" r="12.500" fill="#fff" /><circle cx="26" cy="27" r="10" fill="#c8942a" /><path d="M16 26a10 9 0 0 1 20 0z" fill="#e0b040" />
              </svg>
              <LogoWords><LogoName>code<LogoTail>jock</LogoTail><LogoMark>®</LogoMark></LogoName><LogoLine>software solutions</LogoLine></LogoWords>
            </Logo>
          </Document>
          <Gutter />
          <RightDock>
            <Header name="Properties" />
            <PaneBar $pad={1}>
              <Toggled><CategoryIcon /></Toggled><Tool $w={20}><SortIcon /></Tool><Rule $r={6} /><Tool $w={22}><AddPropIcon /></Tool><Tool $w={18}><AddPropIcon off /></Tool>
              <ComboBox text="Button.PushButton" ls={-0.1} pad={4} />
            </PaneBar>
            <Box $h={195}>
              <Grid>
                <GridHead><GridMargin /><HeadText>General</HeadText></GridHead>
                <GridHead><GridMargin><Expander $open $plain /></GridMargin><HeadText>Inherited</HeadText></GridHead>
                {props.map(([name, value, more]) => (
                  <GridRow key={name}>
                    <GridMargin>{more && <Expander $plain />}</GridMargin>
                    <GridName>{name}</GridName>
                    <GridValue $tight={value.length > 20}>{name === "TextColor" && <ColorChip />}{value}</GridValue>
                  </GridRow>
                ))}
              </Grid>
            </Box>
            <Spacer $h={3} />
            <Box $h={58} $bg={BEIGE}><Described>General</Described></Box>
            <Spacer $h={4} />
            <Header name="Image Preview" />
            <PaneBar>
              <Tool $w={20}><PencilIcon /></Tool><MenuGap $w={68}>Image Name:</MenuGap><ComboBox text="Blue\button.png" ls={-0.15} />
            </PaneBar>
            <Box $h={210}>
              <Checker>{swatches.map(([edge, glow, fill], i) => <Swatch key={i} $edge={edge} $glow={glow} $fill={fill} />)}</Checker>
            </Box>
            <Spacer $h={3} />
            <Box $h={34} $bg={BEIGE}><Info>Dimensions: 22 x 138<br />Image Size: 2 KB</Info></Box>
          </RightDock>
        </Main>
        <Status>
          <Grow>Ready</Grow><Key $w={29}>CAP</Key><Key $w={33}>NUM</Key><Key $w={36}>SCRL</Key><MenuGap $w={7} /><SizeGrip />
        </Status>
      </Client>
    </Window>
  );
}
